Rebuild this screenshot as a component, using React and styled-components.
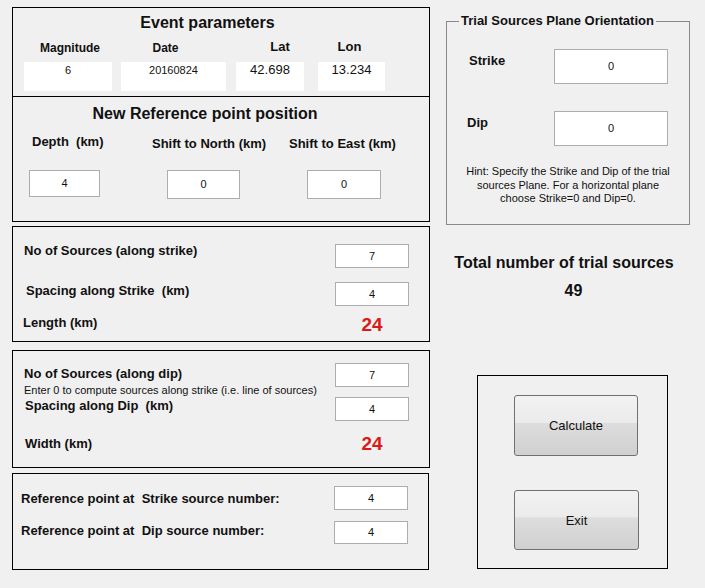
import React from "react";
import styled, { createGlobalStyle } from "styled-components";

const GlobalStyle = createGlobalStyle`
  html, body { margin: 0; padding: 0; background: #f0f0f0; }
  body { font-family: "Liberation Sans", Arial, sans-serif; color: #111; }
  * { box-sizing: border-box; }
`;

const Page = styled.div`
  display: flex;
  align-items: flex-start;
  width: 705px;
  height: 588px;
  padding: 7px 0 0 12px;
  background: #f0f0f0;
`;

const LeftColumn = styled.div`
  display: flex;
  flex-direction: column;
  width: 418px;
`;

const Panel = styled.div`
  border: 1px solid #000;
  width: ${(p) => p.w || 418}px;
  height: ${(p) => p.h}px;
  margin-top: ${(p) => p.mt || 0}px;
  padding-top: ${(p) => p.pt || 0}px;
`;

const Section = styled.div`
  height: ${(p) => p.h}px;
  padding-top: ${(p) => p.pt}px;
  border-bottom: ${(p) => (p.divider ? "1px solid #000" : "none")};
`;

const Title = styled.div`
  font-size: 16px;
  font-weight: bold;
  line-height: 19px;
  text-align: center;
  padding-right: ${(p) => p.offset || 0}px;
`;

const FieldRow = styled.div`
  display: flex;
  align-items: flex-end;
  margin-top: 7px;
  padding-left: 11px;
`;

const Cell = styled.div`
  display: flex;
  flex-direction: column;
  width: ${(p) => p.w}px;
  margin-left: ${(p) => p.ml || 0}px;
`;

const CellLabel = styled.div`
  font-size: ${(p) => p.size}px;
  line-height: ${(p) => p.size + 2}px;
  font-weight: bold;
  text-align: center;
  white-space: nowrap;
  margin-bottom: ${(p) => p.mb}px;
  padding-left: ${(p) => Math.max(p.shift * 2, 0)}px;
  padding-right: ${(p) => Math.max(-p.shift * 2, 0)}px;
`;

const Edit = styled.div`
  display: flex;
  justify-content: center;
  align-items: ${(p) => (p.top ? "flex-start" : "center")};
  width: ${(p) => (p.w ? `${p.w}px` : "100%")};
  height: ${(p) => p.h}px;
  margin-left: ${(p) => p.ml || 0}px;
  margin-top: ${(p) => p.mt || 0}px;
  padding-top: ${(p) => p.pt || 0}px;
  background: #fff;
  border: ${(p) => (p.flat ? "none" : "1px solid #adadad")};
  font-size: ${(p) => p.size || 11}px;
  line-height: ${(p) => (p.size || 11) + 2}px;
  color: #111;
`;

const Columns = styled.div`
  display: flex;
`;

const Col = styled.div`
  width: ${(p) => p.w || "auto"};
`;

const ColHead = styled.div`
  height: 47px;
  padding-top: ${(p) => p.pt}px;
  padding-left: ${(p) => p.pl || 0}px;
  font-size: 13px;
  line-height: 15px;
  font-weight: bold;
  white-space: pre;
`;

const Row = styled.div`
  display: grid;
  grid-template-columns: 1fr 74px;
  height: ${(p) => (p.h ? `${p.h}px` : "auto")};
  padding-left: ${(p) => p.indent}px;
  padding-right: 20px;
`;

const Label = styled.div`
  font-size: 13px;
  line-height: 16px;
  font-weight: bold;
  white-space: pre;
  margin-top: ${(p) => p.mt || 0}px;
`;

const Note = styled.div`
  font-size: 11px;
  line-height: 13px;
  font-weight: normal;
  margin-top: 2px;
  white-space: nowrap;
`;

const RedValue = styled.div`
  font-size: 19px;
  line-height: 22px;
  font-weight: bold;
  color: #d91a1a;
  text-align: center;
`;

const RightColumn = styled.div`
  display: flex;
  flex-direction: column;
  width: 244px;
  margin-left: 16px;
`;

const GroupBox = styled.fieldset`
  margin: 6px 0 0 0;
  padding: 0;
  height: 212px;
  border: 1px solid #8a8a8a;
  min-width: 0;
`;

const Legend = styled.legend`
  margin-left: 12px;
  padding: 0 2px;
  font-size: 13px;
  line-height: 16px;
  font-weight: bold;
`;

const OrientRow = styled.div`
  display: grid;
  grid-template-columns: 107px 114px;
  height: ${(p) => p.h}px;
  margin-top: ${(p) => p.mt || 0}px;
`;

const OrientLabel = styled.div`
  font-size: 13px;
  line-height: 16px;
  font-weight: bold;
  padding-left: ${(p) => p.pl}px;
  margin-top: ${(p) => p.mt}px;
`;

const Hint = styled.div`
  margin-top: 19px;
  font-size: 11px;
  line-height: 13.5px;
  text-align: center;
`;

const TotalTitle = styled.div`
  margin-top: 28px;
  font-size: 16px;
  line-height: 19px;
  font-weight: bold;
  text-align: center;
  padding-right: 8px;
`;

const TotalValue = styled.div`
  margin-top: 9px;
  font-size: 16px;
  line-height: 19px;
  font-weight: bold;
  text-align: center;
  padding-left: 11px;
`;

const ButtonPanel = styled.div`
  display: flex;
  flex-direction: column;
  gap: 34px;
  width: 191px;
  height: 194px;
  margin: 75px 0 0 31px;
  padding: 19px 0 0 36px;
  border: 1px solid #000;
`;

const Button = styled.button`
  width: ${(p) => p.w}px;
  height: ${(p) => p.h}px;
  padding: 0;
  border: 1px solid #707070;
  border-radius: 3px;
  background: linear-gradient(
    #f2f2f2 0%,
    #ebebeb 45%,
    #dddddd 46%,
    #d0d0d0 100%
  );
  font-family: "Liberation Sans", Arial, sans-serif;
  font-size: 13px;
  color: #111;
  cursor: pointer;
`;

export default function App() {
  return (
    <>
      <GlobalStyle />
      <Page>
        <LeftColumn>
          <Panel h={215}>
            <Section h={89} pt={5} divider>
              <Title offset={27}>Event parameters</Title>
              <FieldRow>
                <Cell w={88}>
                  <CellLabel size={12} mb={7} shift={2}>Magnitude</CellLabel>
                  <Edit flat top h={29} pt={2}>6</Edit>
                </Cell>
                <Cell w={105} ml={9}>
                  <CellLabel size={12} mb={7} shift={-8}>Date</CellLabel>
                  <Edit flat top h={29} pt={2}>20160824</Edit>
                </Cell>
                <Cell w={68} ml={10}>
                  <CellLabel size={13} mb={8} shift={10}>Lat</CellLabel>
                  <Edit flat top h={29} size={13} pt={0}>42.698</Edit>
                </Cell>
                <Cell w={67} ml={14}>
                  <CellLabel size={13} mb={8} shift={-2}>Lon</CellLabel>
                  <Edit flat top h={29} size={13} pt={0}>13.234</Edit>
                </Cell>
              </FieldRow>
            </Section>
            <Section h={124} pt={7}>
              <Title offset={32}>New Reference point position</Title>
              <Columns>
                <Col w="139px">
                  <ColHead pt={11} pl={19}>Depth  (km)</ColHead>
                  <Edit w={71} h={27} ml={16}>4</Edit>
                </Col>
                <Col w="137px">
                  <ColHead pt={13}>Shift to North (km)</ColHead>
                  <Edit w={73} h={29} ml={15}>0</Edit>
                </Col>
                <Col>
                  <ColHead pt={13}>Shift to East (km)</ColHead>
                  <Edit w={74} h={29} ml={18}>0</Edit>
                </Col>
              </Columns>
            </Section>
          </Panel>

          <Panel h={116} mt={4} pt={16}>
            <Row h={39} indent={11}>
              <Label>No of Sources (along strike)</Label>
              <Edit h={24} mt={1}>7</Edit>
            </Row>
            <Row h={32} indent={13}>
              <Label mt={1}>Spacing along Strike  (km)</Label>
              <Edit h={24}>4</Edit>
            </Row>
            <Row indent={10}>
              <Label mt={1}>Length (km)</Label>
              <RedValue>24</RedValue>
            </Row>
          </Panel>

          <Panel h={118} mt={8} pt={12}>
            <Row h={34} indent={11}>
              <div>
                <Label mt={3}>No of Sources (along dip)</Label>
                <Note>Enter 0 to compute sources along strike (i.e. line of sources)</Note>
              </div>
              <Edit h={24}>7</Edit>
            </Row>
            <Row h={36} indent={12}>
              <Label mt={1}>Spacing along Dip  (km)</Label>
              <Edit h={24}>4</Edit>
            </Row>
            <Row indent={12}>
              <Label mt={3}>Width (km)</Label>
              <RedValue>24</RedValue>
            </Row>
          </Panel>

          <Panel h={97} w={417} mt={5} pt={12}>
            <Row h={35} indent={8}>
              <Label mt={5}>Reference point at  Strike source number:</Label>
              <Edit h={24}>4</Edit>
            </Row>
            <Row indent={8}>
              <Label mt={2}>Reference point at  Dip source number:</Label>
              <Edit h={23}>4</Edit>
            </Row>
          </Panel>
        </LeftColumn>

        <RightColumn>
          <GroupBox>
            <Legend>Trial Sources Plane Orientation</Legend>
            <OrientRow h={62} mt={20}>
              <OrientLabel pl={22} mt={4}>Strike</OrientLabel>
              <Edit h={35}>0</Edit>
            </OrientRow>
            <OrientRow h={35}>
              <OrientLabel pl={20} mt={4}>Dip</OrientLabel>
              <Edit h={35}>0</Edit>
            </OrientRow>
            <Hint>
              Hint: Specify the Strike and Dip of the trial
              <br />
              sources Plane. For a horizontal plane
              <br />
              choose Strike=0 and Dip=0.
            </Hint>
          </GroupBox>
          <TotalTitle>Total number of trial sources</TotalTitle>
          <TotalValue>49</TotalValue>
          <ButtonPanel>
            <Button w={124} h={61}>Calculate</Button>
            <Button w={125} h={60}>Exit</Button>
          </ButtonPanel>
        </RightColumn>
      </Page>
    </>
  );
}
